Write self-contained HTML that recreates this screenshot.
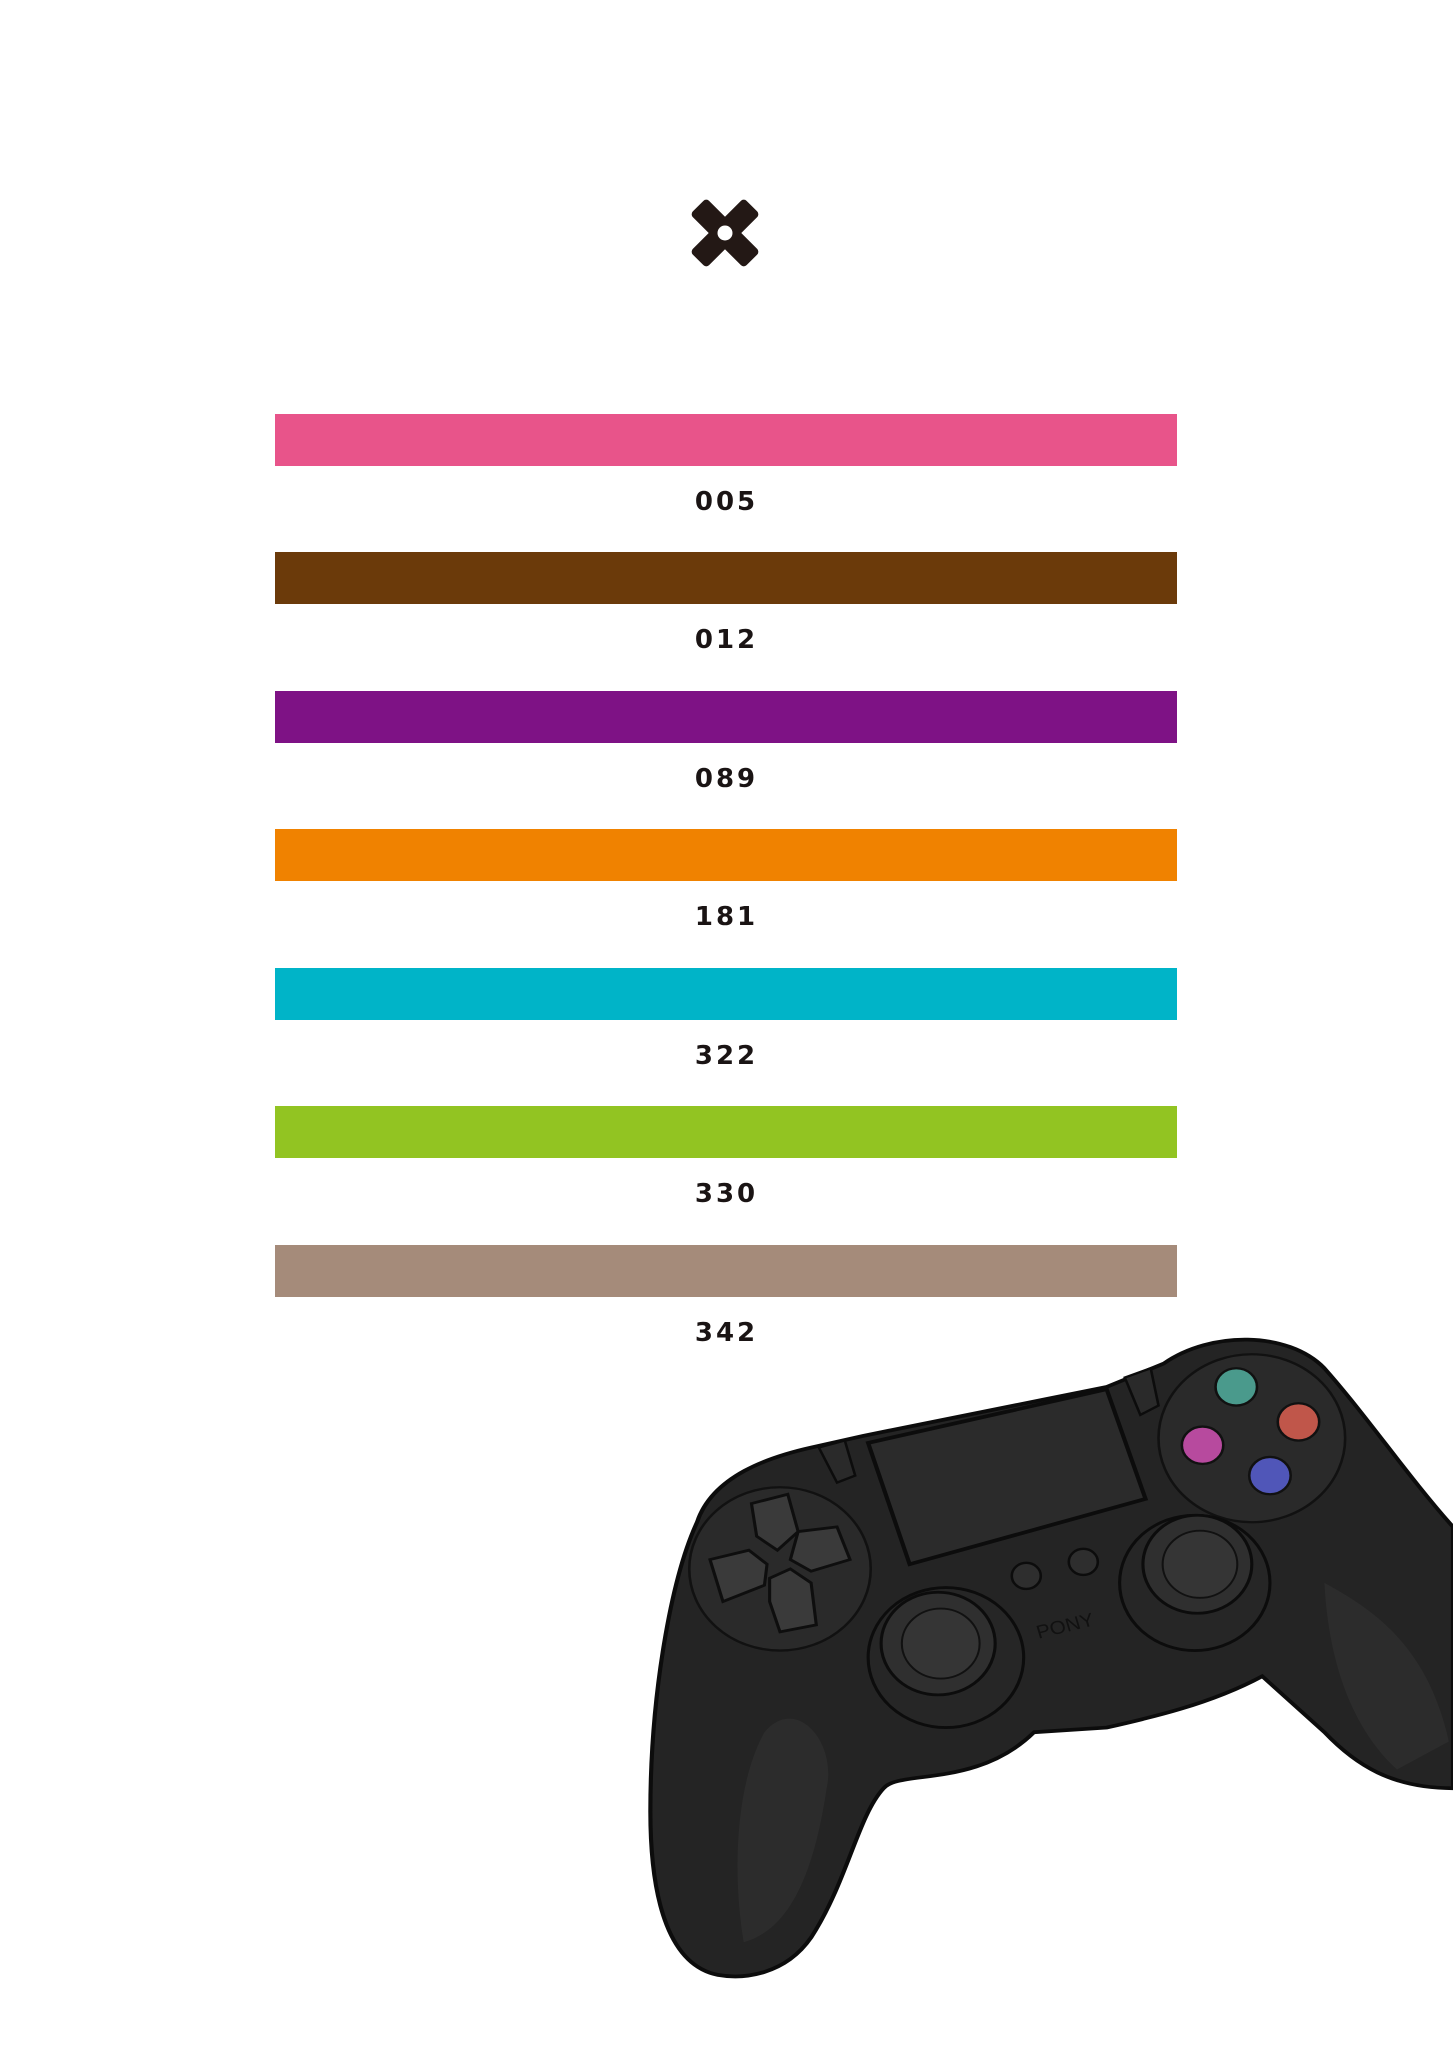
<!DOCTYPE html>
<html><head><meta charset="utf-8"><style>
html,body{margin:0;padding:0;background:#fff}
body{width:1453px;height:2048px;position:relative;overflow:hidden;font-family:"Liberation Sans",sans-serif}
.bar{position:absolute;left:275px;width:902px;height:52px}
.lbl{position:absolute;left:0;width:1453px;text-align:center;font-weight:bold;font-size:26px;letter-spacing:3px;color:#1a1414;line-height:30px;font-family:"DejaVu Sans",sans-serif}
</style></head><body>
<svg style="position:absolute;left:685px;top:193px" width="80" height="80" viewBox="-40 -40 80 80">
<g fill="#231815">
<rect x="-11.5" y="-38" width="23" height="76" rx="4" transform="rotate(45)"/>
<rect x="-11.5" y="-38" width="23" height="76" rx="4" transform="rotate(-45)"/>
</g>
<circle r="7.5" fill="#fff"/>
</svg>

<div class="bar" style="top:414px;background:#e8548a"></div>
<div class="lbl" style="top:487px">005</div>
<div class="bar" style="top:552px;background:#6b3a0a"></div>
<div class="lbl" style="top:625px">012</div>
<div class="bar" style="top:691px;background:#7e1285"></div>
<div class="lbl" style="top:764px">089</div>
<div class="bar" style="top:829px;background:#f08200"></div>
<div class="lbl" style="top:902px">181</div>
<div class="bar" style="top:968px;background:#00b4c8"></div>
<div class="lbl" style="top:1041px">322</div>
<div class="bar" style="top:1106px;background:#92c422"></div>
<div class="lbl" style="top:1179px">330</div>
<div class="bar" style="top:1245px;background:#a58b7a"></div>
<div class="lbl" style="top:1318px">342</div>

<svg style="position:absolute;left:640px;top:1320px" width="813" height="728" viewBox="0 0 1568 1404">
<g transform="translate(0,3) scale(1,0.9)">
<path d="M150 1400 C60 1380 20 1250 20 1050 C20 800 60 550 110 430 C140 330 250 290 330 270 L430 245 L900 140 L1010 90 C1100 20 1250 20 1320 100 C1400 200 1480 330 1568 440 L1568 1000 C1450 1000 1380 950 1320 880 L1200 760 C1100 820 980 850 900 870 L760 880 C650 1000 500 960 470 1000 C420 1060 400 1200 330 1320 C280 1400 200 1410 150 1400 Z" fill="#242424" stroke="#0c0c0c" stroke-width="8"/>
<path d="M200 1330 C180 1200 180 1000 240 880 C300 800 380 900 360 1000 C340 1150 300 1300 200 1330 Z" fill="#2c2c2c"/>
<path d="M1320 560 C1420 620 1520 700 1560 900 L1460 960 C1400 900 1330 780 1320 560 Z" fill="#2c2c2c"/>
<path d="M345 270 L395 255 L415 330 L380 345 Z" fill="#2a2a2a" stroke="#0c0c0c" stroke-width="5"/>
<path d="M935 120 L985 100 L1000 180 L965 200 Z" fill="#2a2a2a" stroke="#0c0c0c" stroke-width="5"/>
<circle cx="270" cy="530" r="175" fill="#2a2a2a" stroke="#111" stroke-width="5"/>
<g fill="#3a3a3a" stroke="#0e0e0e" stroke-width="6">
<path d="M215 390 L285 370 L305 450 L265 490 L225 460 Z"/>
<path d="M305 450 L380 440 L405 510 L330 535 L290 510 Z"/>
<path d="M250 550 L290 530 L330 560 L340 650 L270 665 L250 600 Z"/>
<path d="M135 510 L210 490 L245 520 L240 565 L160 600 Z"/>
</g>
<path d="M440 260 L900 145 L975 380 L520 520 Z" fill="#2b2b2b" stroke="#0c0c0c" stroke-width="8"/>
<circle cx="1180" cy="250" r="180" fill="#2a2a2a" stroke="#111" stroke-width="5"/>
<circle cx="1150" cy="140" r="40" fill="#4a9a8c" stroke="#111" stroke-width="5"/>
<circle cx="1270" cy="215" r="40" fill="#c0564a" stroke="#111" stroke-width="5"/>
<circle cx="1085" cy="265" r="40" fill="#b74a9e" stroke="#111" stroke-width="5"/>
<circle cx="1215" cy="330" r="40" fill="#5056b8" stroke="#111" stroke-width="5"/>
<circle cx="745" cy="545" r="28" fill="#2e2e2e" stroke="#0c0c0c" stroke-width="5"/>
<circle cx="855" cy="515" r="28" fill="#2e2e2e" stroke="#0c0c0c" stroke-width="5"/>
<text x="760" y="665" font-family="Liberation Sans,sans-serif" font-size="40" fill="#111" transform="rotate(-15 820 640)">PONY</text>
<circle cx="590" cy="720" r="150" fill="#262626" stroke="#0c0c0c" stroke-width="6"/>
<circle cx="575" cy="690" r="110" fill="#2f2f2f" stroke="#0c0c0c" stroke-width="6"/>
<circle cx="580" cy="690" r="75" fill="#353535" stroke="#111" stroke-width="4"/>
<circle cx="1070" cy="560" r="145" fill="#262626" stroke="#0c0c0c" stroke-width="6"/>
<circle cx="1075" cy="520" r="105" fill="#2f2f2f" stroke="#0c0c0c" stroke-width="6"/>
<circle cx="1080" cy="520" r="72" fill="#353535" stroke="#111" stroke-width="4"/>
</g>
</svg>
</body></html>
